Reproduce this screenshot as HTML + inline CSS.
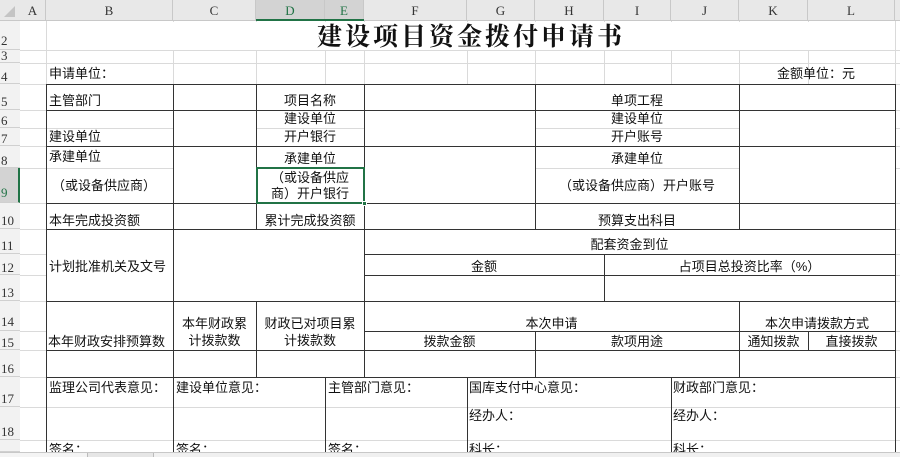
<!DOCTYPE html>
<html><head><meta charset="utf-8"><style>
*{margin:0;padding:0;box-sizing:border-box}
body{width:900px;height:457px;overflow:hidden;background:#fff;position:relative;font-family:"Liberation Sans","Noto Sans CJK SC",sans-serif;font-size:13px;color:#111}
div{position:absolute}
.h{height:1px;background:#333}
.v{width:1px;background:#333}
.gh{height:1px;background:#dadada;left:20px;width:880px}
.gv{width:1px;background:#dadada;top:21px;height:431px}
.lg{height:1px;background:#dadada}
.t{height:16px;line-height:16px;white-space:nowrap}
.c{text-align:center}
.ch{top:0;height:21px;line-height:21px;text-align:center;font-family:"Liberation Serif","Noto Serif CJK SC",serif;font-size:13px;color:#333;border-right:1px solid #c8c8c8}
.rh{left:0;width:20px;font-family:"Liberation Serif",serif;font-size:13px;color:#333;text-align:left;padding-left:1px;border-bottom:1px solid #d0d0d0;background:#f2f2f2}
</style></head><body>
<!-- gridlines -->
<div class="gv" style="left:46px"></div><div class="gv" style="left:173px"></div><div class="gv" style="left:256px"></div><div class="gv" style="left:325px"></div><div class="gv" style="left:364px"></div><div class="gv" style="left:467px"></div><div class="gv" style="left:535px"></div><div class="gv" style="left:604px"></div><div class="gv" style="left:671px"></div><div class="gv" style="left:739px"></div><div class="gv" style="left:808px"></div><div class="gv" style="left:895px"></div>
<div class="gh" style="top:50px"></div><div class="gh" style="top:63px"></div><div class="gh" style="top:84px"></div><div class="gh" style="top:110px"></div><div class="gh" style="top:128px"></div><div class="gh" style="top:146px"></div><div class="gh" style="top:168px"></div><div class="gh" style="top:203px"></div><div class="gh" style="top:229px"></div><div class="gh" style="top:254px"></div><div class="gh" style="top:275px"></div><div class="gh" style="top:301px"></div><div class="gh" style="top:331px"></div><div class="gh" style="top:350px"></div><div class="gh" style="top:377px"></div><div class="gh" style="top:407px"></div><div class="gh" style="top:440px"></div>
<!-- white cover for merged title rows -->
<div style="left:47px;top:22px;width:848px;height:28px;background:#fff"></div>
<!-- white cover for table interior -->
<div style="left:47px;top:85px;width:848px;height:292px;background:#fff"></div>
<div style="left:47px;top:378px;width:848px;height:74px;background:#fff"></div>
<div class="lg" style="left:47px;width:126px;top:128px"></div>
<div class="lg" style="left:257px;width:107px;top:128px"></div>
<div class="lg" style="left:536px;width:203px;top:128px"></div>
<div class="lg" style="left:47px;width:126px;top:168px"></div>
<div class="lg" style="left:257px;width:107px;top:168px"></div>
<div class="lg" style="left:536px;width:203px;top:168px"></div>
<div class="lg" style="left:47px;width:848px;top:407px"></div>
<div class="lg" style="left:47px;width:848px;top:440px"></div>
<!-- headers -->
<div style="left:0;top:0;width:900px;height:21px;background:#e8e8e8;border-bottom:1px solid #c8c8c8"></div>
<div style="left:4px;top:6px;width:0;height:0;border-left:11px solid transparent;border-bottom:11px solid #c4c4c4"></div>
<div class="ch" style="left:20px;width:26px">A</div>
<div class="ch" style="left:46px;width:127px">B</div>
<div class="ch" style="left:173px;width:83px">C</div>
<div class="ch" style="left:256px;width:69px;background:#d3d3d3;color:#217346">D</div>
<div class="ch" style="left:325px;width:39px;background:#d3d3d3;color:#217346">E</div>
<div style="left:256px;top:19px;width:108px;height:2px;background:#217346"></div>
<div class="ch" style="left:364px;width:103px">F</div>
<div class="ch" style="left:467px;width:68px">G</div>
<div class="ch" style="left:535px;width:69px">H</div>
<div class="ch" style="left:604px;width:67px">I</div>
<div class="ch" style="left:671px;width:68px">J</div>
<div class="ch" style="left:739px;width:69px">K</div>
<div class="ch" style="left:808px;width:87px">L</div>
<div style="left:0;top:21px;width:20px;height:431px;background:#f2f2f2;border-right:1px solid #c8c8c8"></div>
<div class="rh" style="top:21px;height:29px;line-height:40px">2</div>
<div class="rh" style="top:50px;height:13px;line-height:12px">3</div>
<div class="rh" style="top:63px;height:21px;line-height:28px">4</div>
<div class="rh" style="top:84px;height:26px;line-height:36px">5</div>
<div class="rh" style="top:110px;height:18px;line-height:22px">6</div>
<div class="rh" style="top:128px;height:18px;line-height:22px">7</div>
<div class="rh" style="top:146px;height:22px;line-height:30px">8</div>
<div class="rh" style="top:168px;height:35px;line-height:50px;background:#d3d3d3;color:#217346;border-right:2px solid #217346">9</div>
<div class="rh" style="top:203px;height:26px;line-height:36px">10</div>
<div class="rh" style="top:229px;height:25px;line-height:34px">11</div>
<div class="rh" style="top:254px;height:21px;line-height:28px">12</div>
<div class="rh" style="top:275px;height:26px;line-height:36px">13</div>
<div class="rh" style="top:301px;height:30px;line-height:42px">14</div>
<div class="rh" style="top:331px;height:19px;line-height:24px">15</div>
<div class="rh" style="top:350px;height:27px;line-height:38px">16</div>
<div class="rh" style="top:377px;height:30px;line-height:44px">17</div>
<div class="rh" style="top:407px;height:33px;line-height:50px">18</div>
<div class="rh" style="top:440px;height:12px"></div>
<!-- black borders horizontal -->
<div class="h" style="left:46px;top:84px;width:850px"></div>
<div class="h" style="left:46px;top:110px;width:850px"></div>
<div class="h" style="left:46px;top:146px;width:850px"></div>
<div class="h" style="left:46px;top:203px;width:850px"></div>
<div class="h" style="left:46px;top:229px;width:850px"></div>
<div class="h" style="left:364px;top:254px;width:532px"></div>
<div class="h" style="left:364px;top:275px;width:532px"></div>
<div class="h" style="left:46px;top:301px;width:850px"></div>
<div class="h" style="left:364px;top:331px;width:532px"></div>
<div class="h" style="left:46px;top:350px;width:850px"></div>
<div class="h" style="left:46px;top:377px;width:850px"></div>
<!-- vertical -->
<div class="v" style="left:46px;top:84px;height:368px"></div>
<div class="v" style="left:173px;top:84px;height:368px"></div>
<div class="v" style="left:256px;top:84px;height:145px"></div>
<div class="v" style="left:256px;top:301px;height:76px"></div>
<div class="v" style="left:364px;top:84px;height:293px"></div>
<div class="v" style="left:535px;top:84px;height:145px"></div>
<div class="v" style="left:535px;top:331px;height:46px"></div>
<div class="v" style="left:604px;top:254px;height:47px"></div>
<div class="v" style="left:739px;top:84px;height:145px"></div>
<div class="v" style="left:739px;top:301px;height:76px"></div>
<div class="v" style="left:808px;top:331px;height:19px"></div>
<div class="v" style="left:895px;top:84px;height:368px"></div>
<div class="v" style="left:325px;top:377px;height:75px"></div>
<div class="v" style="left:467px;top:377px;height:75px"></div>
<div class="v" style="left:671px;top:377px;height:75px"></div>
<!-- selection -->
<div style="left:256px;top:167px;width:109px;height:37px;border:2px solid #217346"></div>
<div style="left:362px;top:201px;width:5px;height:5px;background:#217346;border:1px solid #fff"></div>
<!-- title -->
<div style="left:47px;top:21px;width:848px;height:30px;line-height:34px;text-align:center;font-family:'Liberation Serif','Noto Serif CJK SC',serif;font-weight:bold;font-size:25px;letter-spacing:3px;color:#111">建设项目资金拨付申请书</div>
<!-- texts -->
<div class="t" style="left:49px;top:66px">申请单位：</div>
<div class="t" style="left:777px;top:66px">金额单位：元</div>
<div class="t" style="left:49px;top:93px">主管部门</div>
<div class="t c" style="left:256px;width:108px;top:93px">项目名称</div>
<div class="t c" style="left:535px;width:204px;top:93px">单项工程</div>
<div class="t c" style="left:256px;width:108px;top:111px">建设单位</div>
<div class="t c" style="left:256px;width:108px;top:129px">开户银行</div>
<div class="t c" style="left:535px;width:204px;top:111px">建设单位</div>
<div class="t c" style="left:535px;width:204px;top:129px">开户账号</div>
<div class="t" style="left:49px;top:129px">建设单位</div>
<div class="t" style="left:49px;top:149px">承建单位</div>
<div class="t c" style="left:256px;width:108px;top:151px">承建单位</div>
<div class="t c" style="left:535px;width:204px;top:151px">承建单位</div>
<div class="t" style="left:52px;top:178px">（或设备供应商）</div>
<div class="t c" style="left:256px;width:108px;top:170px">（或设备供应</div>
<div class="t c" style="left:256px;width:108px;top:186px">商）开户银行</div>
<div class="t c" style="left:535px;width:204px;top:178px">（或设备供应商）开户账号</div>
<div class="t" style="left:49px;top:213px">本年完成投资额</div>
<div class="t c" style="left:256px;width:108px;top:213px">累计完成投资额</div>
<div class="t c" style="left:535px;width:204px;top:213px">预算支出科目</div>
<div class="t" style="left:49px;top:259px">计划批准机关及文号</div>
<div class="t c" style="left:364px;width:531px;top:237px">配套资金到位</div>
<div class="t c" style="left:364px;width:240px;top:259px">金额</div>
<div class="t c" style="left:604px;width:291px;top:259px">占项目总投资比率（%）</div>
<div class="t c" style="left:173px;width:83px;top:316px">本年财政累</div>
<div class="t c" style="left:173px;width:83px;top:333px">计拨款数</div>
<div class="t c" style="left:256px;width:108px;top:316px">财政已对项目累</div>
<div class="t c" style="left:256px;width:108px;top:333px">计拨款数</div>
<div class="t" style="left:48px;top:334px">本年财政安排预算数</div>
<div class="t c" style="left:364px;width:375px;top:316px">本次申请</div>
<div class="t c" style="left:739px;width:156px;top:316px">本次申请拨款方式</div>
<div class="t c" style="left:364px;width:171px;top:334px">拨款金额</div>
<div class="t c" style="left:535px;width:204px;top:334px">款项用途</div>
<div class="t c" style="left:739px;width:69px;top:334px">通知拨款</div>
<div class="t c" style="left:808px;width:87px;top:334px">直接拨款</div>
<div class="t" style="left:49px;top:380px">监理公司代表意见：</div>
<div class="t" style="left:176px;top:380px">建设单位意见：</div>
<div class="t" style="left:328px;top:380px">主管部门意见：</div>
<div class="t" style="left:469px;top:380px">国库支付中心意见：</div>
<div class="t" style="left:673px;top:380px">财政部门意见：</div>
<div class="t" style="left:469px;top:408px">经办人：</div>
<div class="t" style="left:673px;top:408px">经办人：</div>
<div class="t" style="left:49px;top:442px">签名：</div>
<div class="t" style="left:176px;top:442px">签名：</div>
<div class="t" style="left:328px;top:442px">签名：</div>
<div class="t" style="left:469px;top:442px">科长：</div>
<div class="t" style="left:673px;top:442px">科长：</div>
<!-- bottom bar -->
<div style="left:0;top:452px;width:900px;height:5px;background:#e6e6e6;border-top:1px solid #c8c8c8"></div>
<div style="left:0;top:453px;width:88px;height:4px;background:#f4f4f4;border-right:1px solid #bbb"></div>
<div style="left:153px;top:453px;width:747px;height:4px;background:#f0f0f0;border-left:1px solid #bbb"></div>
</body></html>
